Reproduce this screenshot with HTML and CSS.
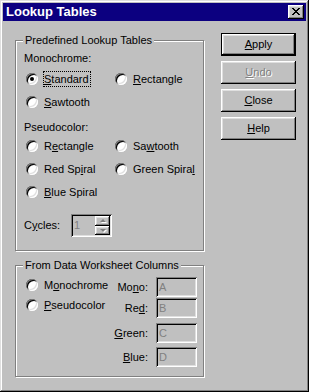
FILE: index.html
```html
<!DOCTYPE html>
<html>
<head>
<meta charset="utf-8">
<link rel="stylesheet" href="styles.css">
</head>
<body>
<div class="window">
  <div class="titlebar">
    <span class="title">Lookup Tables</span>
    <button class="close" aria-label="Close">
      <svg width="8" height="7" viewBox="0 0 8 7" shape-rendering="crispEdges"><path d="M0 0h2v1H0zM6 0h2v1H6zM1 1h2v1H1zM5 1h2v1H5zM2 2h4v1H2zM3 3h2v1H3zM2 4h4v1H2zM1 5h2v1H1zM5 5h2v1H5zM0 6h2v1H0zM6 6h2v1H6z" fill="#000"/></svg>
    </button>
  </div>
  <div class="content">
    <div class="groups">
      <div class="group group1">
        <span class="group-title">Predefined Lookup Tables</span>
        <div class="heading heading-mono">Monochrome:</div>
        <div class="radio-grid grid-mono">
          <div class="opt"><span class="radio checked"></span><span class="text focus"><u>S</u>tandard</span></div>
          <div class="opt"><span class="radio"></span><span class="text"><u>R</u>ectangle</span></div>
          <div class="opt"><span class="radio"></span><span class="text"><u>S</u>awtooth</span></div>
        </div>
        <div class="heading heading-pseudo">Pseudocolor:</div>
        <div class="radio-grid">
          <div class="opt"><span class="radio"></span><span class="text">R<u>e</u>ctangle</span></div>
          <div class="opt"><span class="radio"></span><span class="text">Sa<u>w</u>tooth</span></div>
          <div class="opt"><span class="radio"></span><span class="text">Red Sp<u>i</u>ral</span></div>
          <div class="opt"><span class="radio"></span><span class="text">Green Spira<u>l</u></span></div>
          <div class="opt"><span class="radio"></span><span class="text"><u>B</u>lue Spiral</span></div>
        </div>
        <div class="cycles">
          <span class="cycles-label">C<u>y</u>cles:</span>
          <div class="spin">
            <span class="spin-value">1</span>
            <div class="spin-btns">
              <span class="spin-btn"><span class="arrow up"></span></span>
              <span class="spin-btn"><span class="arrow down"></span></span>
            </div>
          </div>
        </div>
      </div>
      <div class="group group2">
        <span class="group-title">From Data Worksheet Columns</span>
        <div class="group2-body">
          <div class="radio-col">
            <div class="opt short"><span class="radio"></span><span class="text">M<u>o</u>nochrome</span></div>
            <div class="opt short"><span class="radio"></span><span class="text"><u>P</u>seudocolor</span></div>
          </div>
          <div class="fields">
            <div class="field f-mono"><span class="field-label">Mo<u>n</u>o:</span><span class="edit">A</span></div>
            <div class="field f-red"><span class="field-label">Re<u>d</u>:</span><span class="edit">B</span></div>
            <div class="field f-green"><span class="field-label"><u>G</u>reen:</span><span class="edit">C</span></div>
            <div class="field f-blue"><span class="field-label"><u>B</u>lue:</span><span class="edit">D</span></div>
          </div>
        </div>
      </div>
    </div>
    <div class="buttons">
      <button class="btn default"><u>A</u>pply</button>
      <button class="btn disabled"><u>U</u>ndo</button>
      <button class="btn"><u>C</u>lose</button>
      <button class="btn"><u>H</u>elp</button>
    </div>
  </div>
</div>
</body>
</html>
```
FILE: styles.css
```css
html, body {
  margin: 0;
  padding: 0;
  background: #c0c0c0;
}
body {
  font-family: "Liberation Sans", Arial, sans-serif;
  font-size: 11px;
  line-height: 13px;
  color: #000;
}
u { text-decoration: underline; text-underline-offset: 1px; }

.window {
  width: 309px;
  height: 392px;
  box-sizing: border-box;
  padding: 3px;
  background: #c0c0c0;
  box-shadow: inset -1px -1px 0 #000, inset 1px 1px 0 #dfdfdf, inset -2px -2px 0 #808080, inset 2px 2px 0 #fff;
}

.titlebar {
  height: 18px;
  background: #0c0080;
  display: flex;
  align-items: center;
  justify-content: space-between;
  padding: 0 2px 0 3px;
}
.title {
  color: #fff;
  font-weight: bold;
  font-size: 13px;
  line-height: 16px;
}
.close {
  width: 16px;
  height: 14px;
  padding: 0;
  border: 0;
  margin: 0;
  background: #c0c0c0;
  display: flex;
  align-items: center;
  justify-content: center;
  box-shadow: inset -1px -1px 0 #000, inset 1px 1px 0 #fff, inset -2px -2px 0 #808080, inset 2px 2px 0 #dfdfdf;
}
.close svg { display: block; margin: 0 1px 1px 0; }

.content {
  display: flex;
  padding: 12px 0 0 12px;
}
.groups { margin-top: 7px; }

.group {
  position: relative;
  width: 189px;
  box-sizing: border-box;
  border: 1px solid #808080;
  box-shadow: inset 1px 1px 0 #fff, 1px 1px 0 #fff;
  padding: 0 6px 0 8px;
}
.group-title {
  position: absolute;
  top: -7px;
  left: 7px;
  padding: 0 2px;
  background: #c0c0c0;
  line-height: 13px;
  white-space: nowrap;
}
.group1 { height: 211px; }
.group2 { height: 112px; margin-top: 14px; }

.heading { line-height: 13px; }
.heading-mono { margin-top: 11px; }
.grid-mono { margin-top: 2px; }
.heading-pseudo { margin-top: 8px; }

.radio-grid {
  display: grid;
  grid-template-columns: 89px auto;
  margin-left: 2px;
}
.opt {
  display: flex;
  align-items: center;
  height: 23px;
  white-space: nowrap;
}
.opt.short { height: 20px; }
.radio {
  position: relative;
  flex: none;
  width: 12px;
  height: 12px;
  border-radius: 50%;
  background: #fff;
  box-shadow: inset 1px 1px 0 #808080, inset -1px -1px 0 #fff, inset 2px 2px 0 #000, inset -2px -2px 0 #dfdfdf;
}
.radio.checked::after {
  content: "";
  position: absolute;
  left: 4px;
  top: 4px;
  width: 4px;
  height: 4px;
  border-radius: 50%;
  background: #000;
}
.text {
  margin-left: 5px;
  border: 1px solid transparent;
  padding: 0 1px 0 0;
  line-height: 14px;
}
.text.focus { border: 1px dotted #000; }

.cycles {
  display: flex;
  align-items: center;
  height: 23px;
  margin-top: 11px;
}
.cycles-label { width: 47px; }
.spin {
  display: flex;
  width: 41px;
  height: 23px;
  box-sizing: border-box;
  padding: 2px;
  box-shadow: inset 1px 1px 0 #808080, inset -1px -1px 0 #fff, inset 2px 2px 0 #000, inset -2px -2px 0 #dfdfdf;
}
.spin-value {
  flex: 1;
  color: #808080;
  padding-left: 1px;
  line-height: 19px;
}
.spin-btns {
  display: flex;
  flex-direction: column;
  width: 15px;
}
.spin-btn {
  flex: 1;
  display: flex;
  align-items: center;
  justify-content: center;
  box-shadow: inset -1px -1px 0 #000, inset 1px 1px 0 #fff, inset -2px -2px 0 #808080, inset 2px 2px 0 #dfdfdf;
}
.arrow {
  width: 0;
  height: 0;
  border-left: 3px solid transparent;
  border-right: 3px solid transparent;
  filter: drop-shadow(1px 1px 0 #fff);
}
.arrow.up { border-bottom: 3px solid #808080; }
.arrow.down { border-top: 3px solid #808080; }

.group2-body {
  display: flex;
  justify-content: space-between;
}
.radio-col {
  margin-top: 9px;
  margin-left: 2px;
}
.fields {
  margin-top: 11px;
  display: flex;
  flex-direction: column;
  align-items: flex-end;
}
.field {
  display: flex;
  align-items: center;
  height: 20px;
}
.f-red { margin-top: 1px; }
.f-green { margin-top: 5px; }
.f-blue { margin-top: 4px; }
.field-label { margin-right: 8px; }
.edit {
  width: 41px;
  height: 20px;
  box-sizing: border-box;
  padding: 3px 3px 0;
  color: #808080;
  line-height: 14px;
  box-shadow: inset 1px 1px 0 #808080, inset -1px -1px 0 #fff, inset 2px 2px 0 #000, inset -2px -2px 0 #dfdfdf;
}

.buttons {
  display: flex;
  flex-direction: column;
  gap: 5px;
  margin-left: 17px;
}
.btn {
  width: 75px;
  height: 23px;
  margin: 0;
  padding: 0;
  border: 0;
  background: #c0c0c0;
  font-family: inherit;
  font-size: 11px;
  line-height: 13px;
  color: #000;
  box-shadow: inset -1px -1px 0 #000, inset 1px 1px 0 #fff, inset -2px -2px 0 #808080, inset 2px 2px 0 #dfdfdf;
}
.btn.default {
  box-shadow: inset 0 0 0 1px #000, inset -2px -2px 0 #000, inset 2px 2px 0 #fff, inset -3px -3px 0 #808080, inset 3px 3px 0 #dfdfdf;
}
.btn.disabled {
  color: #808080;
  text-shadow: 1px 1px 0 #fff;
}
```
